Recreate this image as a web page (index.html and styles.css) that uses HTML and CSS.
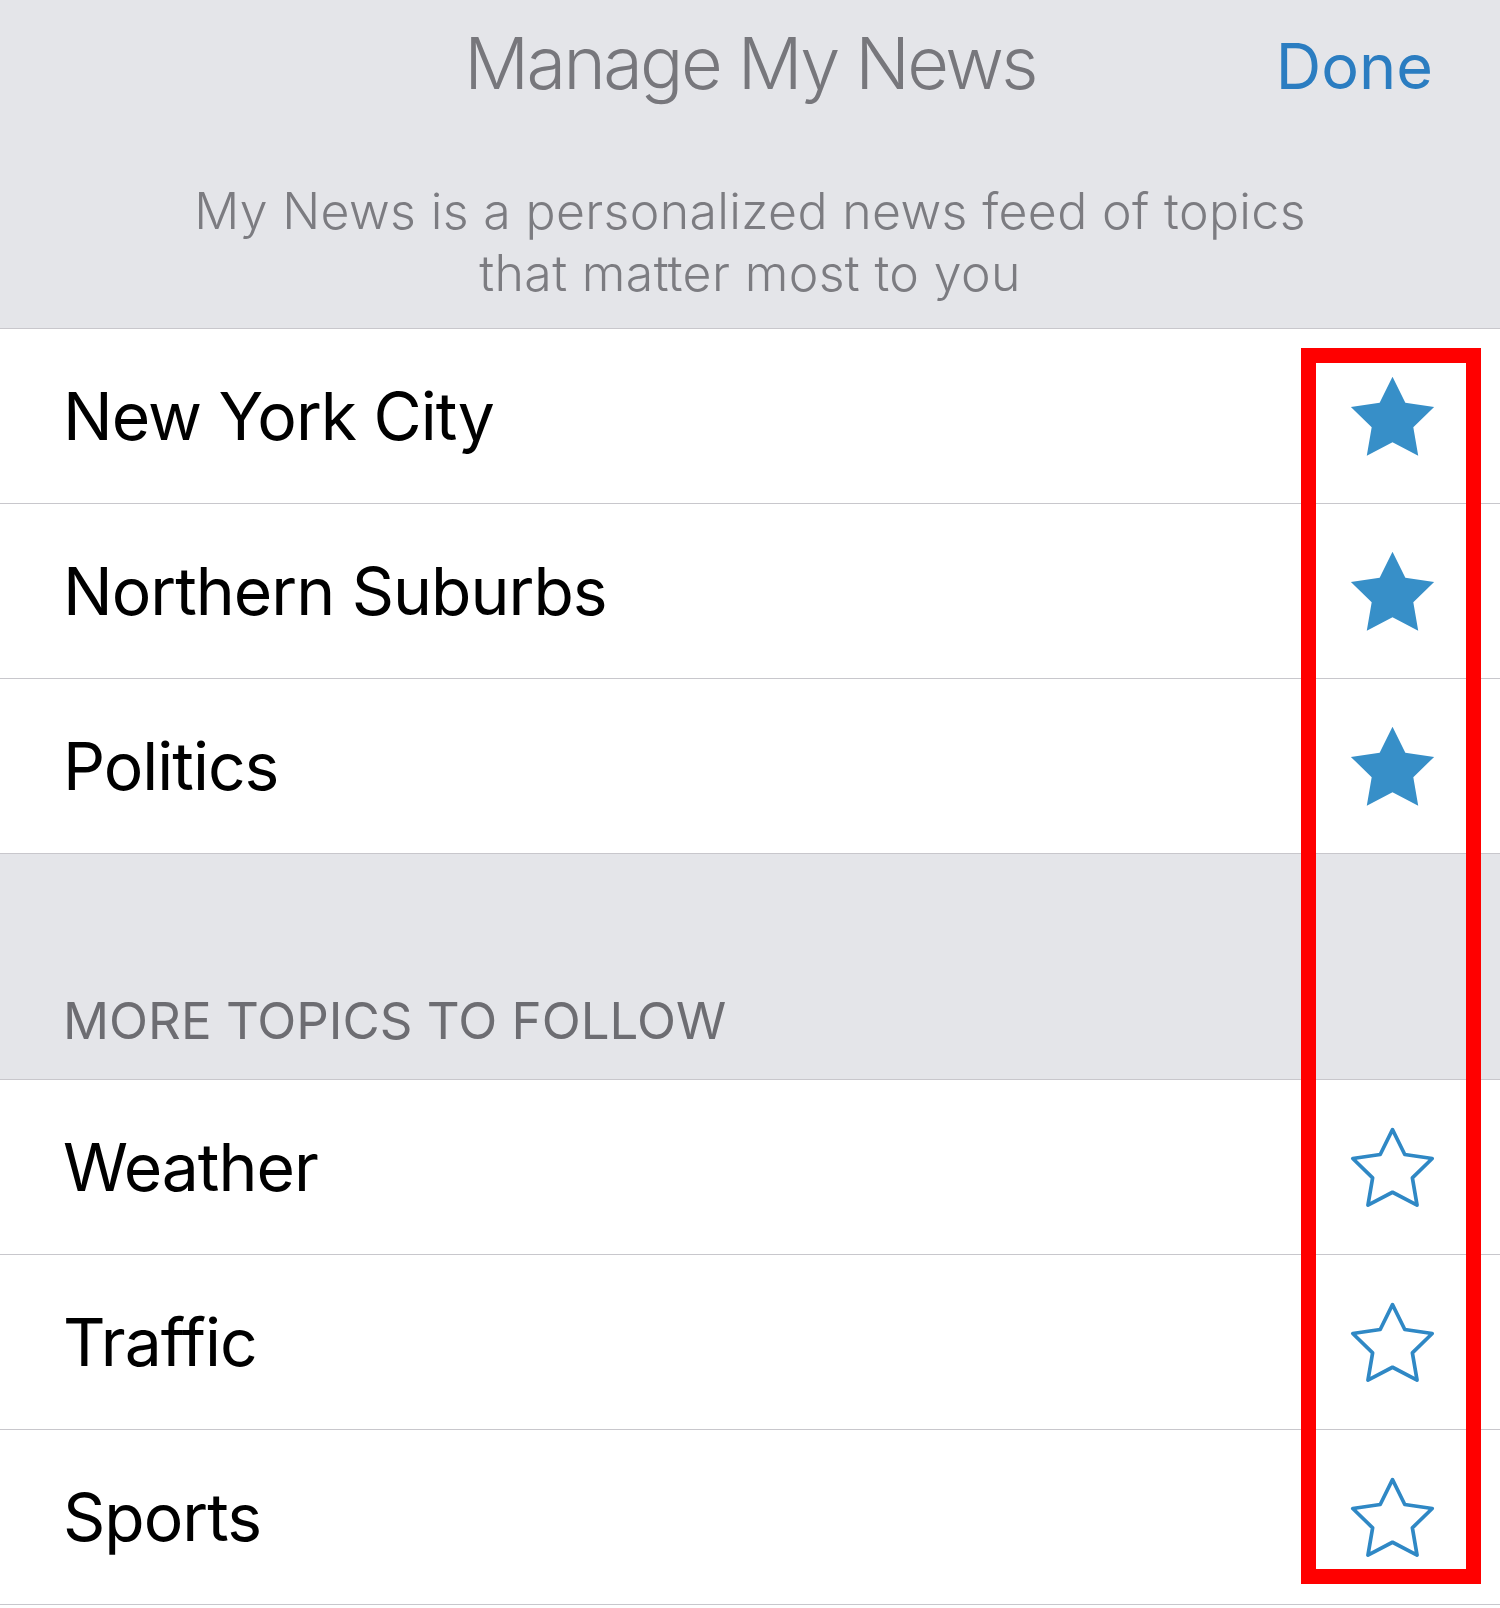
FILE: index.html
```html
<!DOCTYPE html>
<html lang="en">
  <head>
    <meta charset="utf-8" />
    <meta name="viewport" content="width=device-width, initial-scale=1" />
    <title>Manage My News</title>
    <link rel="stylesheet" href="styles.css">
  </head>

  <body>
    <main class="screen">
      <header class="top">
        <div class="nav">
          <span></span>
          <h1 class="title">Manage My News</h1>
          <a class="done">Done</a>
        </div>
        <p class="intro">My News is a personalized news feed of topics<br>that matter most to you</p>
      </header>

      <ul class="topics">
        <li class="topic"><span>New York City</span>
          <svg class="star on" viewBox="-2 -3 104 97"><polygon points="50,0 64.69,29.77 97.55,34.55 73.78,57.73 79.39,90.45 50,75 20.61,90.45 26.22,57.73 2.45,34.55 35.31,29.77"/></svg>
        </li>
        <li class="topic"><span>Northern Suburbs</span>
          <svg class="star on" viewBox="-2 -3 104 97"><polygon points="50,0 64.69,29.77 97.55,34.55 73.78,57.73 79.39,90.45 50,75 20.61,90.45 26.22,57.73 2.45,34.55 35.31,29.77"/></svg>
        </li>
        <li class="topic"><span>Politics</span>
          <svg class="star on" viewBox="-2 -3 104 97"><polygon points="50,0 64.69,29.77 97.55,34.55 73.78,57.73 79.39,90.45 50,75 20.61,90.45 26.22,57.73 2.45,34.55 35.31,29.77"/></svg>
        </li>
      </ul>

      <div class="section">MORE TOPICS TO FOLLOW</div>

      <ul class="topics">
        <li class="topic"><span>Weather</span>
          <svg class="star" viewBox="-2 -3 104 97"><polygon points="50,0 64.69,29.77 97.55,34.55 73.78,57.73 79.39,90.45 50,75 20.61,90.45 26.22,57.73 2.45,34.55 35.31,29.77"/></svg>
        </li>
        <li class="topic"><span>Traffic</span>
          <svg class="star" viewBox="-2 -3 104 97"><polygon points="50,0 64.69,29.77 97.55,34.55 73.78,57.73 79.39,90.45 50,75 20.61,90.45 26.22,57.73 2.45,34.55 35.31,29.77"/></svg>
        </li>
        <li class="topic"><span>Sports</span>
          <svg class="star" viewBox="-2 -3 104 97"><polygon points="50,0 64.69,29.77 97.55,34.55 73.78,57.73 79.39,90.45 50,75 20.61,90.45 26.22,57.73 2.45,34.55 35.31,29.77"/></svg>
        </li>
      </ul>

      <div class="highlight"></div>
    </main>
  </body>
</html>
```

FILE: styles.css
```css
body {
    margin: 0;
    background: #fff;
    font-family: Inter, "Noto Sans", sans-serif;
}
.screen {
    position: relative;
    width: 1500px;
}
.top {
    background: #e4e5e9;
    border-bottom: 1px solid #c8c7cc;
    padding: 27px 0 24px;
}
.nav {
    display: grid;
    grid-template-columns: 1fr auto 1fr;
    align-items: baseline;
}
.title {
    margin: 0;
    font-size: 72px;
    line-height: 72px;
    font-weight: 300;
    letter-spacing: -2.6px;
    color: #77777c;
}
.done {
    justify-self: end;
    padding-right: 67px;
    font-size: 63px;
    color: #2b7dc1;
}
.intro {
    margin: 76px 0 0;
    text-align: center;
    font-size: 50px;
    line-height: 62px;
    font-weight: 300;
    letter-spacing: 0.35px;
    color: #7c7c81;
}
.topics {
    list-style: none;
    margin: 0;
    padding: 0;
}
.topic {
    display: flex;
    align-items: center;
    justify-content: space-between;
    height: 174px;
    border-bottom: 1px solid #c8c7cc;
    padding: 0 62px 0 63px;
    font-size: 66px;
    letter-spacing: -1px;
    color: #000;
}
.star {
    width: 91px;
    height: 85px;
}
.star polygon {
    fill: none;
    stroke: #2f88c5;
    stroke-width: 4.4;
    stroke-linejoin: round;
    transform: scale(0.955);
    transform-origin: 50px 48px;
}
.star.on polygon {
    fill: #378fc8;
    stroke: none;
    transform: none;
}
.section {
    display: flex;
    align-items: flex-end;
    height: 192px;
    padding: 0 0 33px 63px;
    background: #e4e5e9;
    border-bottom: 1px solid #c8c7cc;
    font-size: 51px;
    line-height: 51px;
    color: #6d6d72;
}
.highlight {
    position: absolute;
    left: 1301px;
    top: 348px;
    width: 180px;
    height: 1236px;
    box-sizing: border-box;
    border: 15px solid #ff0000;
}
```
